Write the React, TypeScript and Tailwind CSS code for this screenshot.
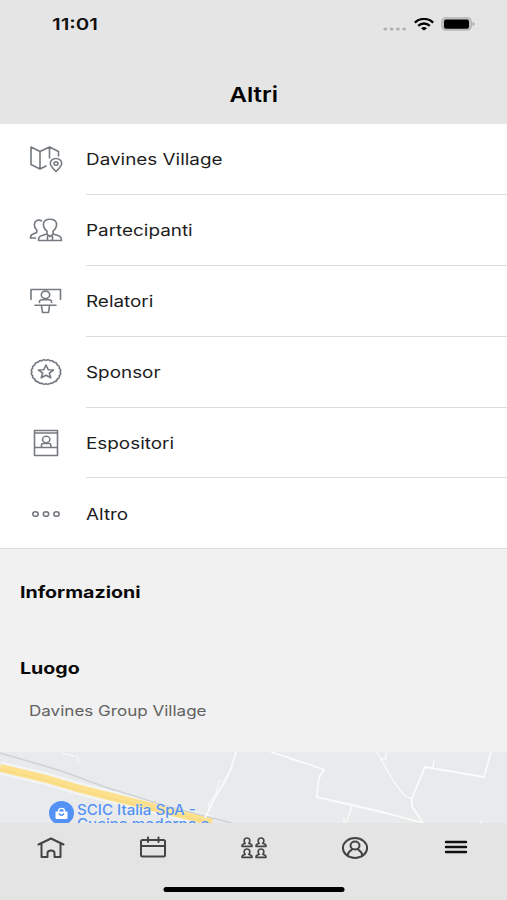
import React from "react";

const stroke = {
  fill: "none",
  stroke: "currentColor",
  strokeLinecap: "round" as const,
  strokeLinejoin: "round" as const,
};

function MapPinIcon() {
  return (
    <svg width="34" height="28" viewBox="0 0 34 28" strokeWidth="1.600" {...stroke}>
      <path d="M20.500 13V2L11 6.500L2 2V19.500L11 24L17 21M11 6.500V24M20.500 2L29.500 6.500V11" />
      <path d="M27 26.500C23.500 23 21.300 21 21.300 18.500A5.700 5 0 0 1 32.700 18.500C32.700 21 30.500 23 27 26.500Z" />
      <ellipse cx="27" cy="18.500" rx="2" ry="1.700" />
    </svg>
  );
}

function PeopleIcon() {
  return (
    <svg width="34" height="26" viewBox="0 0 34 26" strokeWidth="1.600" {...stroke}>
      <path d="M18 14.200C15.300 12 14.200 9.500 14.500 6.500C15.500 .900 26.500 .900 27.500 6.500C27.800 9.500 26.700 12 24 14.200V17L29 18.500C31.500 19.300 32.500 21 32.500 23.500H9.500C9.500 20.500 10.500 19 13 18.500L18 17V14.200" />
      <path d="M18 17.300L21 19.500L24 17.300M18.500 19.500V23M23.500 19.500V23" />
      <path d="M12.500 3.800C9.500 2.200 5.500 3.500 5.300 7.500C5.200 10 6 11.200 7.800 13V15.500L4 17C2 17.800 1.500 19 1.500 21H6.500" />
    </svg>
  );
}

function SpeakerIcon() {
  return (
    <svg width="34" height="28" viewBox="0 0 34 28" strokeWidth="1.600" {...stroke}>
      <path d="M2 12.500V2.500H31.500V12.500M6 18.200H27M12.500 19L13.500 25.500H19.500L20.500 19M10.500 15.500V14.500C10.500 13 11.500 12.700 13 12.700H20C21.500 12.700 22.500 13 22.500 14.500V15.500" />
      <ellipse cx="16.500" cy="7.800" rx="4.200" ry="3.700" />
    </svg>
  );
}

function SponsorIcon() {
  return (
    <svg width="34" height="28" viewBox="0 0 34 28" strokeWidth="1.600" {...stroke}>
      <path d="M17 2.500Q19 .800 21 2.800Q23.500 2 25 4.300Q27.800 4.300 28.300 7Q31 8 30.300 10.300Q32.700 12 31 14Q32.700 16 30.300 17.700Q31 20 28.300 21Q27.800 23.700 25 23.700Q23.500 26 21 25.200Q19 27.200 17 25.500Q15 27.200 13 25.200Q10.500 26 9 23.700Q6.200 23.700 5.700 21Q3 20 3.700 17.700Q1.300 16 3 14Q1.300 12 3.700 10.300Q3 8 5.700 7Q6.200 4.300 9 4.300Q10.500 2 13 2.800Q15 .800 17 2.500Z" />
      <path d="M17 7L19.200 11.700L24.500 12L20.300 15.200L21.800 19.800L17 17.200L12.200 19.800L13.700 15.200L9.500 12L14.800 11.700Z" />
    </svg>
  );
}

function ExhibitorIcon() {
  return (
    <svg width="34" height="28" viewBox="0 0 34 28" strokeWidth="1.600" {...stroke}>
      <path d="M5.500 1.500H28.500V26.500H5.500ZM5.500 4H28.500M5.500 18.500H28.500M12.500 18V15.500C12.500 14.700 13 14.500 14 14.500H20C21 14.500 21.800 14.700 21.800 15.500V18" />
      <ellipse cx="17.200" cy="10.500" rx="3.700" ry="3.200" />
    </svg>
  );
}

function MoreIcon() {
  return (
    <svg width="34" height="10" viewBox="0 0 34 10" strokeWidth="1.600" {...stroke}>
      <ellipse cx="6.500" cy="5" rx="2.700" ry="2.300" />
      <ellipse cx="17" cy="5" rx="2.700" ry="2.300" />
      <ellipse cx="27.500" cy="5" rx="2.700" ry="2.300" />
    </svg>
  );
}

const items = [
  { label: "Davines Village", Icon: MapPinIcon },
  { label: "Partecipanti", Icon: PeopleIcon },
  { label: "Relatori", Icon: SpeakerIcon },
  { label: "Sponsor", Icon: SponsorIcon },
  { label: "Espositori", Icon: ExhibitorIcon },
  { label: "Altro", Icon: MoreIcon },
];

function VenueMap() {
  return (
    <div className="relative h-[71px] overflow-hidden bg-[#e8eaec]">
      <svg className="block" width="507" height="71" viewBox="0 0 507 71" fill="none">
        <path d="M0 16L45 26.500L80 37L140 52L212 70" stroke="#f3f4f5" strokeWidth="13" />
        <path d="M0 16L45 26.500L80 37L140 52L212 70" stroke="#fce08c" strokeWidth="8" />
        <path d="M0 17.500L45 28L80 38.500L140 53.500L212 71" stroke="#f6d780" strokeWidth="1" />
        <path d="M0 1L60 18.500L105 35L150 49L190 60L235 72" stroke="#d0d3d5" strokeWidth="1.600" />
        <g stroke="#fafbfb" strokeWidth="1.800" strokeLinejoin="round">
          <path d="M236 0L231 17L224 31L214 47L205 66" />
          <path d="M224 29H219L216 41L209 51V59M62 1L78 5V11" strokeWidth="1" />
          <path d="M271 0L324 17.500L319 26L316.500 45L352 53L388 61.500L423 71L412 54V46L425 15L484 25L491 0" />
          <path d="M352 54L346 71M344 66V71M377 0L381 7L394 30L405 44L412 47M381 7H386V0M433 16L434 7M481 69V71" strokeWidth="1.300" />
        </g>
      </svg>
      <div className="absolute top-[49px] left-[49px] flex h-[24px] w-[25px] items-center justify-center rounded-[50%] bg-[#5491f5] text-white">
        <svg width="13" height="13" viewBox="0 0 13 13">
          <path d="M3.500 5V4C3.500 .500 9.500 .500 9.500 4V5" fill="none" stroke="currentColor" strokeWidth="1.400" />
          <path d="M.500 4.500H12.500V11Q12.500 12 11.500 12H1.500Q.500 12 .500 11Z" fill="currentColor" />
          <path d="M4 6.500Q6.500 10 9 6.500" fill="none" stroke="#5491f5" strokeWidth="1.300" />
        </svg>
      </div>
      <div className="absolute top-[51px] left-[77px] text-[14px] leading-[14px] font-medium whitespace-nowrap text-[#5491f5] [text-shadow:0_0_2px_#f3f4f5]">
        <div className="origin-left scale-x-[1.08]">SCIC Italia SpA -</div>
        <div className="origin-left scale-x-[1.08]">Cucine moderne e</div>
      </div>
    </div>
  );
}

function Person() {
  return <path d="M4.200 6.300C2.500 4.800 2.700 1 6 1C9.300 1 9.500 4.800 7.800 6.300L10 7.200Q11 7.700 11 9.300H1Q1 7.700 2 7.200Z" />;
}

export default function App() {
  return (
    <div className="flex h-[900px] w-[507px] flex-col overflow-hidden bg-[#f1f1f1] font-[Inter,'Liberation_Sans',sans-serif] text-[#1c1c1e]">
      <header className="h-[124px] shrink-0 bg-[#e5e5e5] text-black">
        <div className="flex h-[48px] items-center justify-between pr-[32px] pl-[52px]">
          <span className="origin-left scale-x-[1.24] text-[16.500px] leading-5 font-semibold text-[#111]">11:01</span>
          <div className="flex items-center">
            <svg width="24" height="4" viewBox="0 0 24 4" className="mt-[9px]" fill="#b0b0b0">
              <ellipse cx="2.300" cy="2" rx="1.900" ry="1.600" />
              <ellipse cx="8.600" cy="2" rx="1.900" ry="1.600" />
              <ellipse cx="14.900" cy="2" rx="1.900" ry="1.600" />
              <ellipse cx="21.200" cy="2" rx="1.900" ry="1.600" />
            </svg>
            <svg width="20" height="13" viewBox="0 0 20 13" className="ml-[7px]" fill="none" stroke="#050505" strokeWidth="2.300">
              <path d="M.800 4.600C6-.300 14-.300 19.200 4.600M4.200 7.800C7.500 4.700 12.500 4.700 15.800 7.800" />
              <path d="M7 10.200Q10 7.700 13 10.200L10 12.600Z" fill="#050505" stroke="none" />
            </svg>
            <svg width="34" height="14" viewBox="0 0 34 14" className="ml-[7px]">
              <rect x=".800" y=".800" width="29.500" height="12.400" rx="4" fill="#c4c4c4" stroke="#b5b5b5" strokeWidth="1.200" />
              <rect x="3" y="2.500" width="25" height="9.300" rx="2" fill="#000" />
              <path d="M31.500 5Q33.700 5.300 33.700 7Q33.700 8.700 31.500 9Z" fill="#a9a9a9" />
            </svg>
          </div>
        </div>
        <h1 className="flex h-[94px] items-center justify-center text-[20.500px] leading-6 font-semibold"><span className="scale-x-[1.17]">Altri</span></h1>
      </header>

      <ul className="h-[425px] shrink-0 border-b border-[#dcdcdc] bg-white">
        {items.map(({ label, Icon }, i) => (
          <li key={label} className="flex h-[70.900px] items-center">
            <div className="flex w-[86px] justify-center pr-[-6px] pl-[6px] text-[#747a80]">
              <Icon />
            </div>
            <div className={i < items.length - 1 ? "flex h-full flex-1 items-center border-b border-[#dcdcdc]" : "flex h-full flex-1 items-center"}>
              <span className="origin-left scale-x-[1.18] text-[16px] leading-6 whitespace-nowrap">{label}</span>
            </div>
          </li>
        ))}
      </ul>

      <section className="flex h-[203px] shrink-0 flex-col items-start pt-[31px] pl-[20px]">
        <h2 className="origin-left scale-x-[1.225] text-[16px] leading-6 font-bold text-[#090909]">Informazioni</h2>
        <h2 className="mt-[52px] origin-left scale-x-[1.225] text-[16px] leading-6 font-bold text-[#090909]">Luogo</h2>
        <p className="mt-[19px] ml-[9px] origin-left scale-x-[1.175] text-[14.500px] leading-6 text-[#626262]">Davines Group Village</p>
      </section>

      <VenueMap />

      <footer className="flex h-[77px] shrink-0 flex-col items-center bg-[#e4e4e4] text-[#444]">
        <nav className="grid h-[49px] w-full grid-cols-5">
          <div className="flex items-center justify-center">
            <svg width="28" height="24" viewBox="0 0 28 24" strokeWidth="2" {...stroke}>
              <path d="M1.500 8.500L14 2.500L26.500 8.500M4.500 8V21H10.500V17C10.500 13.500 17.500 13.500 17.500 17V21H23.500V8" />
            </svg>
          </div>
          <div className="flex items-center justify-center">
            <svg width="28" height="24" viewBox="0 0 28 24" strokeWidth="2" className="translate-x-px" {...stroke}>
              <rect x="2" y="4" width="24" height="16.500" rx="1.500" />
              <path d="M2 10H26M9 1.500V6M19.500 1.500V6" />
            </svg>
          </div>
          <div className="flex items-center justify-center">
            <svg width="26" height="22" viewBox="0 0 26 22" strokeWidth="1.700" className="translate-x-px" {...stroke}>
              <Person />
              <g transform="translate(14 0)"><Person /></g>
              <g transform="translate(0 11)"><Person /></g>
              <g transform="translate(14 11)"><Person /></g>
            </svg>
          </div>
          <div className="flex items-center justify-center">
            <svg width="28" height="24" viewBox="0 0 28 24" strokeWidth="2" {...stroke}>
              <ellipse cx="14" cy="12" rx="12.100" ry="10" />
              <ellipse cx="14" cy="9.500" rx="4.500" ry="4" />
              <path d="M6.500 19.500C7 16 9.500 14.500 11 13.500M21.500 19.500C21 16 18.500 14.500 17 13.500" />
            </svg>
          </div>
          <div className="flex items-center justify-center text-[#111]">
            <svg width="24" height="16" viewBox="0 0 24 16" strokeWidth="2.400" className="-translate-y-px" {...stroke}>
              <path d="M2 3H22M2 8H22M2 13H22" />
            </svg>
          </div>
        </nav>
        <div className="mt-[15px] h-[5px] w-[181px] translate-x-[0.500px] rounded-full bg-black" />
      </footer>
    </div>
  );
}
